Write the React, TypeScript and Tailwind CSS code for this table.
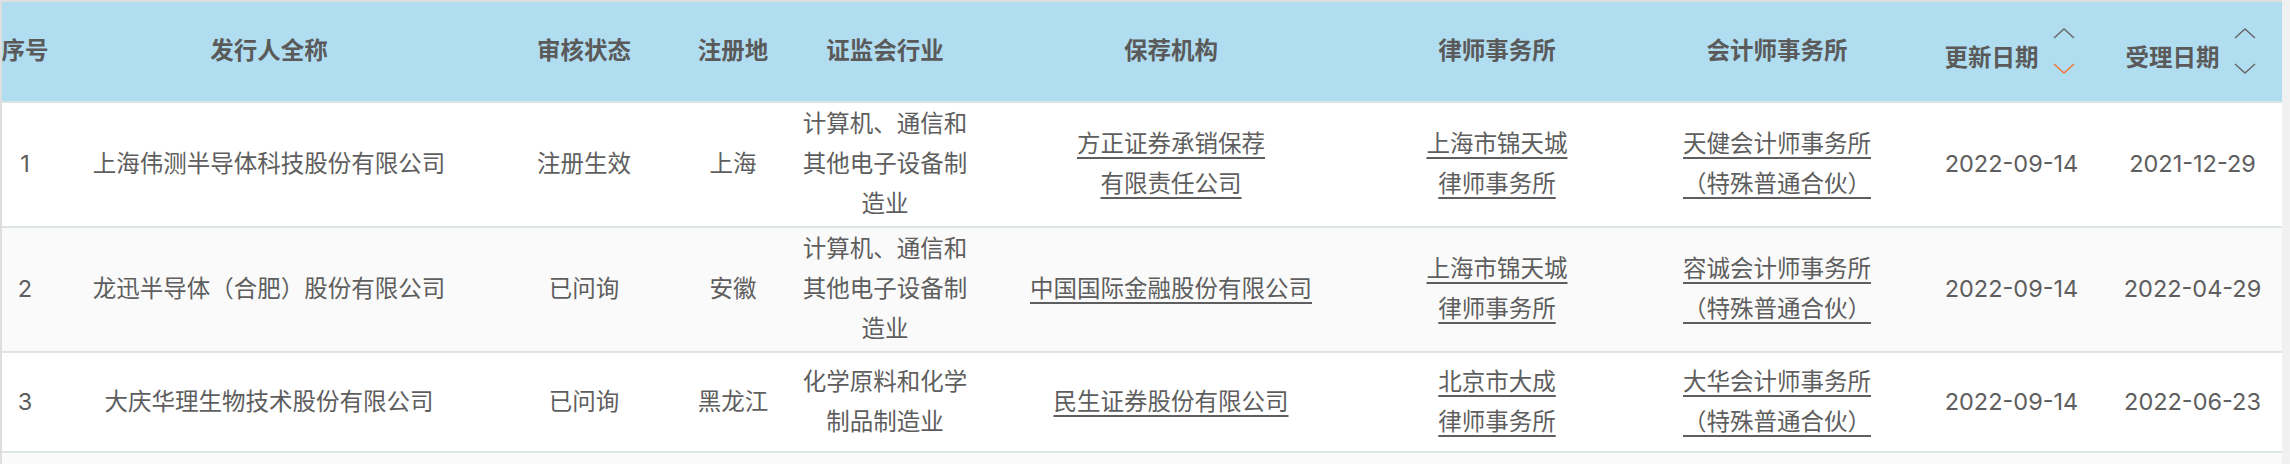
import React from "react";

type Row = {
  no: string;
  name: string;
  status: string;
  place: string;
  industry: string;
  sponsor: string[];
  lawyer: string[];
  accountant: string[];
  update: string;
  accept: string;
  h: string;
  bg: string;
};

const rows: Row[] = [
  {
    no: "1",
    name: "上海伟测半导体科技股份有限公司",
    status: "注册生效",
    place: "上海",
    industry: "计算机、通信和其他电子设备制造业",
    sponsor: ["方正证券承销保荐", "有限责任公司"],
    lawyer: ["上海市锦天城", "律师事务所"],
    accountant: ["天健会计师事务所", "（特殊普通合伙）"],
    update: "2022-09-14",
    accept: "2021-12-29",
    h: "h-[125px]",
    bg: "bg-white",
  },
  {
    no: "2",
    name: "龙迅半导体（合肥）股份有限公司",
    status: "已问询",
    place: "安徽",
    industry: "计算机、通信和其他电子设备制造业",
    sponsor: ["中国国际金融股份有限公司"],
    lawyer: ["上海市锦天城", "律师事务所"],
    accountant: ["容诚会计师事务所", "（特殊普通合伙）"],
    update: "2022-09-14",
    accept: "2022-04-29",
    h: "h-[125px]",
    bg: "bg-[#fafafa]",
  },
  {
    no: "3",
    name: "大庆华理生物技术股份有限公司",
    status: "已问询",
    place: "黑龙江",
    industry: "化学原料和化学制品制造业",
    sponsor: ["民生证券股份有限公司"],
    lawyer: ["北京市大成", "律师事务所"],
    accountant: ["大华会计师事务所", "（特殊普通合伙）"],
    update: "2022-09-14",
    accept: "2022-06-23",
    h: "h-[100px]",
    bg: "bg-white",
  },
];

const cols =
  "grid grid-cols-[46px_442px_188px_110px_194px_378px_274px_286px_183px_179px]";

function SortIcon({ active }: { active?: boolean }) {
  return (
    <span className="flex flex-col items-center justify-between w-[29px] h-[46px] ml-[11px] shrink-0">
      <svg width="22" height="11" viewBox="0 0 22 11" fill="none">
        <path d="M1 10 L11 1 L21 10" stroke="#666666" strokeWidth="1.4" />
      </svg>
      <svg width="22" height="11" viewBox="0 0 22 11" fill="none">
        <path
          d="M1 1 L11 10 L21 1"
          stroke={active ? "#f07535" : "#666666"}
          strokeWidth="1.4"
        />
      </svg>
    </span>
  );
}

function Lines({ lines, link }: { lines: string[]; link?: boolean }) {
  return (
    <div className="flex flex-col items-center">
      {lines.map((l, i) => (
        <span
          key={i}
          className={
            link
              ? "underline decoration-[1.5px] underline-offset-[5px] whitespace-nowrap"
              : "whitespace-nowrap"
          }
        >
          {l}
        </span>
      ))}
    </div>
  );
}

export default function App() {
  const font = {
    fontFamily: '"Inter", "Noto Sans CJK SC", sans-serif',
  };
  return (
    <div
      className="w-[2290px] h-[464px] bg-[#f0f0f0] overflow-hidden text-[23.5px] leading-[40px] text-[#5e5e5e]"
      style={font}
    >
      <div className="w-[2282px] h-[464px] bg-[#fafafa] border-l-2 border-t-[2.5px] border-[#dedede] overflow-hidden">
        {/* header */}
        <div
          className={`${cols} h-[100.5px] bg-[#b1ddf1] border-b-2 border-[#dbe4e8] font-semibold text-[#5a5a5a]`}
        >
          <div className="flex items-center justify-center whitespace-nowrap">序号</div>
          <div className="flex items-center justify-center">发行人全称</div>
          <div className="flex items-center justify-center">审核状态</div>
          <div className="flex items-center justify-center">注册地</div>
          <div className="flex items-center justify-center">证监会行业</div>
          <div className="flex items-center justify-center">保荐机构</div>
          <div className="flex items-center justify-center">律师事务所</div>
          <div className="flex items-center justify-center">会计师事务所</div>
          <div className="flex items-center justify-center">
            <span className="mt-[14px] whitespace-nowrap">更新日期</span>
            <SortIcon active />
          </div>
          <div className="flex items-center justify-center">
            <span className="mt-[14px] whitespace-nowrap">受理日期</span>
            <SortIcon />
          </div>
        </div>
        {rows.map((r) => (
          <div
            key={r.no}
            className={`${cols} ${r.h} ${r.bg} border-b-2 border-[#dde5e9]`}
          >
            <div className="flex items-center justify-center">{r.no}</div>
            <div className="flex items-center justify-center whitespace-nowrap">
              {r.name}
            </div>
            <div className="flex items-center justify-center">{r.status}</div>
            <div className="flex items-center justify-center">{r.place}</div>
            <div className="flex items-center justify-center px-[10px] text-center">
              {r.industry}
            </div>
            <div className="flex items-center justify-center">
              <Lines lines={r.sponsor} link />
            </div>
            <div className="flex items-center justify-center">
              <Lines lines={r.lawyer} link />
            </div>
            <div className="flex items-center justify-center">
              <Lines lines={r.accountant} link />
            </div>
            <div className="flex items-center justify-center">{r.update}</div>
            <div className="flex items-center justify-center">{r.accept}</div>
          </div>
        ))}
      </div>
    </div>
  );
}
